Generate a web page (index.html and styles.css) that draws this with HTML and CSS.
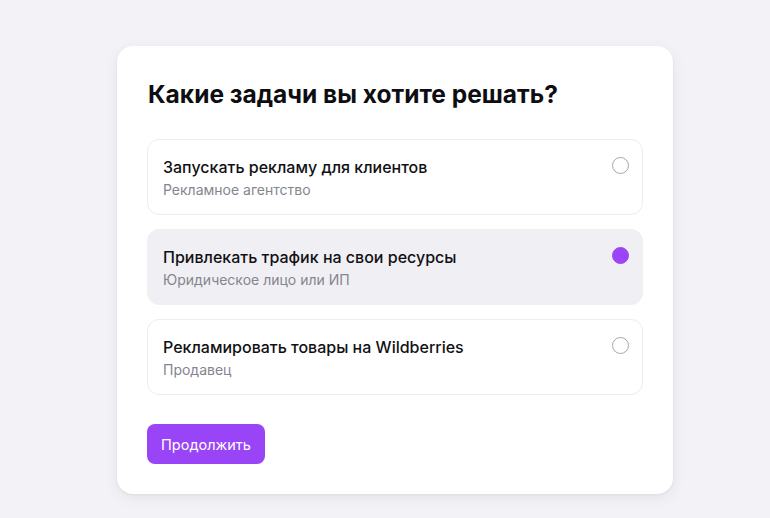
FILE: index.html
```html
<!DOCTYPE html>
<html lang="ru">
<head>
<meta charset="utf-8">
<link rel="stylesheet" href="styles.css">
</head>
<body>
<div class="page">
  <div class="card">
    <h1 class="title">Какие задачи вы хотите решать?</h1>
    <div class="options">
      <div class="option">
        <div class="texts">
          <div class="opt-title">Запускать рекламу для клиентов</div>
          <div class="opt-sub">Рекламное агентство</div>
        </div>
        <span class="radio"></span>
      </div>
      <div class="option selected">
        <div class="texts">
          <div class="opt-title">Привлекать трафик на свои ресурсы</div>
          <div class="opt-sub">Юридическое лицо или ИП</div>
        </div>
        <span class="radio checked"></span>
      </div>
      <div class="option">
        <div class="texts">
          <div class="opt-title">Рекламировать товары на Wildberries</div>
          <div class="opt-sub">Продавец</div>
        </div>
        <span class="radio"></span>
      </div>
    </div>
    <button class="btn">Продолжить</button>
  </div>
</div>
</body>
</html>
```
FILE: styles.css
```css
* { box-sizing: border-box; }
html, body { margin: 0; padding: 0; }
body {
  background: #f3f3f7;
  font-family: Inter, "Noto Sans", sans-serif;
  color: #111114;
  width: 770px;
  height: 518px;
  overflow: hidden;
}
.page {
  padding-top: 46px;
  padding-left: 117px;
}
.card {
  width: 556px;
  height: 448px;
  background: #ffffff;
  border-radius: 16px;
  box-shadow: 0 4px 14px rgba(20, 20, 60, 0.08), 0 1px 3px rgba(20,20,60,0.05);
  padding: 30px 30px 30px 30px;
  display: flex;
  flex-direction: column;
}
.title {
  margin: 0 0 0 1px;
  font-size: 24.5px;
  line-height: 36px;
  font-weight: 700;
  letter-spacing: 0;
  color: #0e0e12;
}
.options {
  margin-top: 27px;
  display: flex;
  flex-direction: column;
  gap: 14px;
}
.option {
  height: 76px;
  border: 1px solid #ececf1;
  border-radius: 12px;
  padding: 0 13px 0 15px;
  display: flex;
  align-items: flex-start;
  justify-content: space-between;
}
.option.selected {
  background: #f0eff4;
  border-color: #f0eff4;
}
.texts {
  padding-top: 16px;
}
.opt-title {
  font-size: 16px;
  line-height: 22px;
  font-weight: 500;
  color: #111114;
}
.opt-sub {
  margin-top: 2px;
  font-size: 14px;
  line-height: 20px;
  color: #85858f;
}
.radio {
  margin-top: 17px;
  width: 17px;
  height: 17px;
  border-radius: 50%;
  border: 1.5px solid #a5a5ad;
  flex-shrink: 0;
}
.radio.checked {
  background: #9a45f6;
  border-color: #9a45f6;
}
.btn {
  margin-top: 29px;
  align-self: flex-start;
  width: 118px;
  height: 40px;
  border: none;
  border-radius: 8px;
  background: #9a44f8;
  color: #ffffff;
  font-family: Inter, "Noto Sans", sans-serif;
  font-size: 14.5px;
  font-weight: 400;
  padding: 0;
}
```
